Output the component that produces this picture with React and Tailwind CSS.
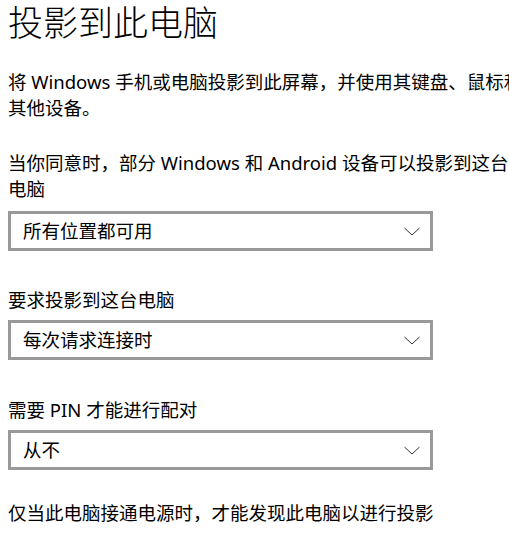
const font = { fontFamily: '"Noto Sans", "Noto Sans CJK SC", sans-serif' };

const Chevron = () => (
  <svg width="16" height="9" viewBox="0 0 16 9" fill="none" className="shrink-0">
    <path d="M0.5 1 L8 8 L15.5 1" stroke="#333" strokeWidth="1" />
  </svg>
);

const Select = ({ value }) => (
  <div className="flex h-10 w-[425px] items-center justify-between border-[3px] border-[#999999] bg-white pl-3 pr-[10px]">
    <span className="text-[18.5px] leading-none text-black">{value}</span>
    <Chevron />
  </div>
);

export default function App() {
  return (
    <div
      className="h-[542px] w-[509px] overflow-hidden bg-white pl-2 text-black"
      style={font}
    >
      <h1 className="whitespace-nowrap text-[35px] font-light leading-[46px]">
        投影到此电脑
      </h1>

      <p className="mt-[23px] whitespace-nowrap text-[18.5px] leading-[26px]">
        将 Windows 手机或电脑投影到此屏幕，并使用其键盘、鼠标和
        <br />
        其他设备。
      </p>

      <p className="mt-[29px] whitespace-nowrap text-[18.5px] leading-[26px]">
        当你同意时，部分 Windows 和 Android 设备可以投影到这台
        <br />
        电脑
      </p>

      <div className="mt-[9px]">
        <Select value="所有位置都可用" />
      </div>

      <p className="mt-[36px] whitespace-nowrap text-[18.5px] leading-[26px]">
        要求投影到这台电脑
      </p>
      <div className="mt-[7px]">
        <Select value="每次请求连接时" />
      </div>

      <p className="mt-[37px] whitespace-nowrap text-[18.5px] leading-[26px]">
        需要 PIN 才能进行配对
      </p>
      <div className="mt-[7px]">
        <Select value="从不" />
      </div>

      <p className="mt-[30px] whitespace-nowrap text-[18.5px] leading-[26px]">
        仅当此电脑接通电源时，才能发现此电脑以进行投影
      </p>
    </div>
  );
}
